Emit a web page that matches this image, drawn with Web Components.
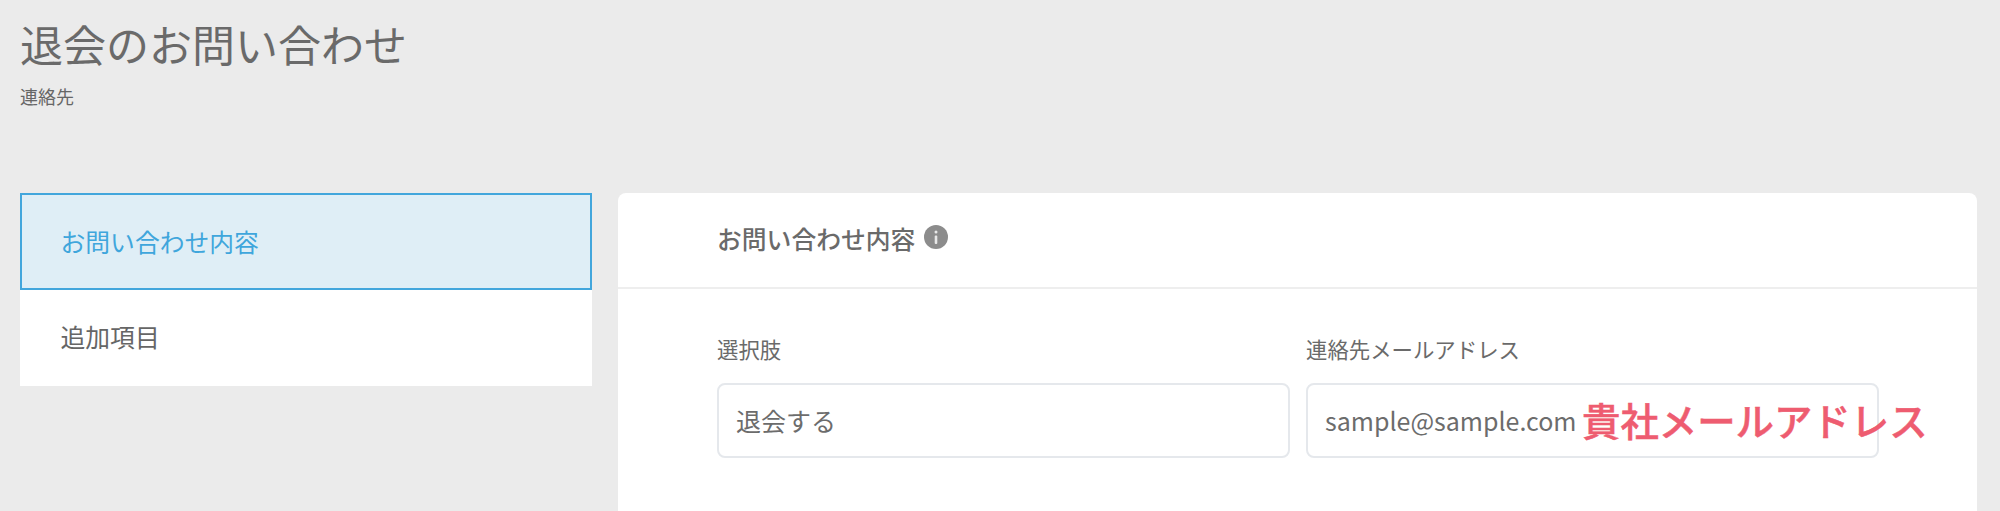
<!DOCTYPE html>
<html lang="ja"><head><meta charset="utf-8"><title>退会のお問い合わせ</title>
<style>
html,body{margin:0;height:511px;overflow:hidden;background:#ebebeb}
body{font-family:"Noto Sans CJK JP","Noto Sans",sans-serif;color:#5f5f5f}
</style></head><body>
<app-page>
  <page-title slot="head" heading="退会のお問い合わせ" sub="連絡先"></page-title>
  <side-nav slot="nav">
    <nav-item active>お問い合わせ内容</nav-item>
    <nav-item>追加項目</nav-item>
  </side-nav>
  <form-card slot="main" heading="お問い合わせ内容">
    <form-field label="選択肢" value="退会する"></form-field>
    <form-field label="連絡先メールアドレス" value="sample@sample.com" note="貴社メールアドレス"></form-field>
  </form-card>
</app-page>
<script>
function def(name,html,init){customElements.define(name,class extends HTMLElement{
  constructor(){super();this.attachShadow({mode:'open'}).innerHTML=html;}
  connectedCallback(){init&&init.call(this,this.shadowRoot);}
});}
def('app-page',`<style>
:host{display:block;box-sizing:border-box;height:511px;padding:0 23px 0 20px;overflow:hidden}
.cols{display:flex;gap:26px;align-items:flex-start;height:318px}
::slotted([slot=nav]){flex:0 0 572px}
::slotted([slot=main]){flex:1 1 0}
</style><slot name="head"></slot><div class="cols"><slot name="nav"></slot><slot name="main"></slot></div>`);
def('page-title',`<style>
:host{display:block;height:193px;padding-top:18px;box-sizing:border-box}
h1{margin:0;font-weight:400;font-size:43px;line-height:50px;color:#6a6a6a}
p{margin:16px 0 0;font-size:18px;line-height:24px;color:#666}
</style><h1></h1><p></p>`,function(r){r.querySelector('h1').textContent=this.getAttribute('heading');r.querySelector('p').textContent=this.getAttribute('sub');});
def('side-nav',`<style>:host{display:block;background:#fff}</style><slot></slot>`);
def('nav-item',`<style>
:host{display:flex;align-items:center;box-sizing:border-box;height:96px;padding:0 0 5px 38.5px;font-size:24.8px;color:#666;border:2px solid transparent}
:host([active]){height:97px;padding-bottom:2px;background:#dfeef6;color:#3fa6dc;border-color:#42a6dc}
</style><slot></slot>`);
def('form-card',`<style>
:host{display:block;background:#fff;border-radius:8px 8px 0 0;height:318px}
header{display:flex;align-items:center;gap:7px;height:96px;box-sizing:border-box;padding:0 0 5px 99px;border-bottom:2px solid #eeeeee;font-size:24.8px;font-weight:500;color:#6a6a6a}
svg{width:24px;height:24px;flex:none;margin:-2px 0 0 1.5px}
.row{display:flex;gap:16px;padding:45px 0 0 99px;width:1170px;box-sizing:border-box}
::slotted(form-field){flex:0 0 573px}
</style><header><span class="t"></span><svg viewBox="0 0 24 24"><circle cx="12" cy="12" r="12" fill="#8c8c8c"/><circle cx="12" cy="7" r="1.5" fill="#e8e8e8"/><rect x="10.7" y="10.4" width="2.6" height="8.6" rx="1" fill="#e8e8e8"/></svg></header><div class="row"><slot></slot></div>`,function(r){r.querySelector('.t').textContent=this.getAttribute('heading');});
def('form-field',`<style>
:host{display:block;position:relative}
label{display:block;font-size:21.4px;line-height:30px;color:#6a6a6a;margin-bottom:19px}
.box{display:flex;align-items:center;box-sizing:border-box;height:75px;padding:0 0 2px 17px;border:2px solid #e5e8ec;border-radius:8px;font-size:25px;color:#6c6c6c;background:#fff}
.note{position:absolute;left:276px;bottom:14px;font-size:38.4px;line-height:50px;font-weight:500;-webkit-text-stroke:.5px #ee5c70;color:#ee5c70;white-space:nowrap}
.note:empty{display:none}
</style><label></label><div class="box"></div><span class="note"></span>`,function(r){r.querySelector('label').textContent=this.getAttribute('label');r.querySelector('.box').textContent=this.getAttribute('value');r.querySelector('.note').textContent=this.getAttribute('note')||'';});
</script>
</body></html>
